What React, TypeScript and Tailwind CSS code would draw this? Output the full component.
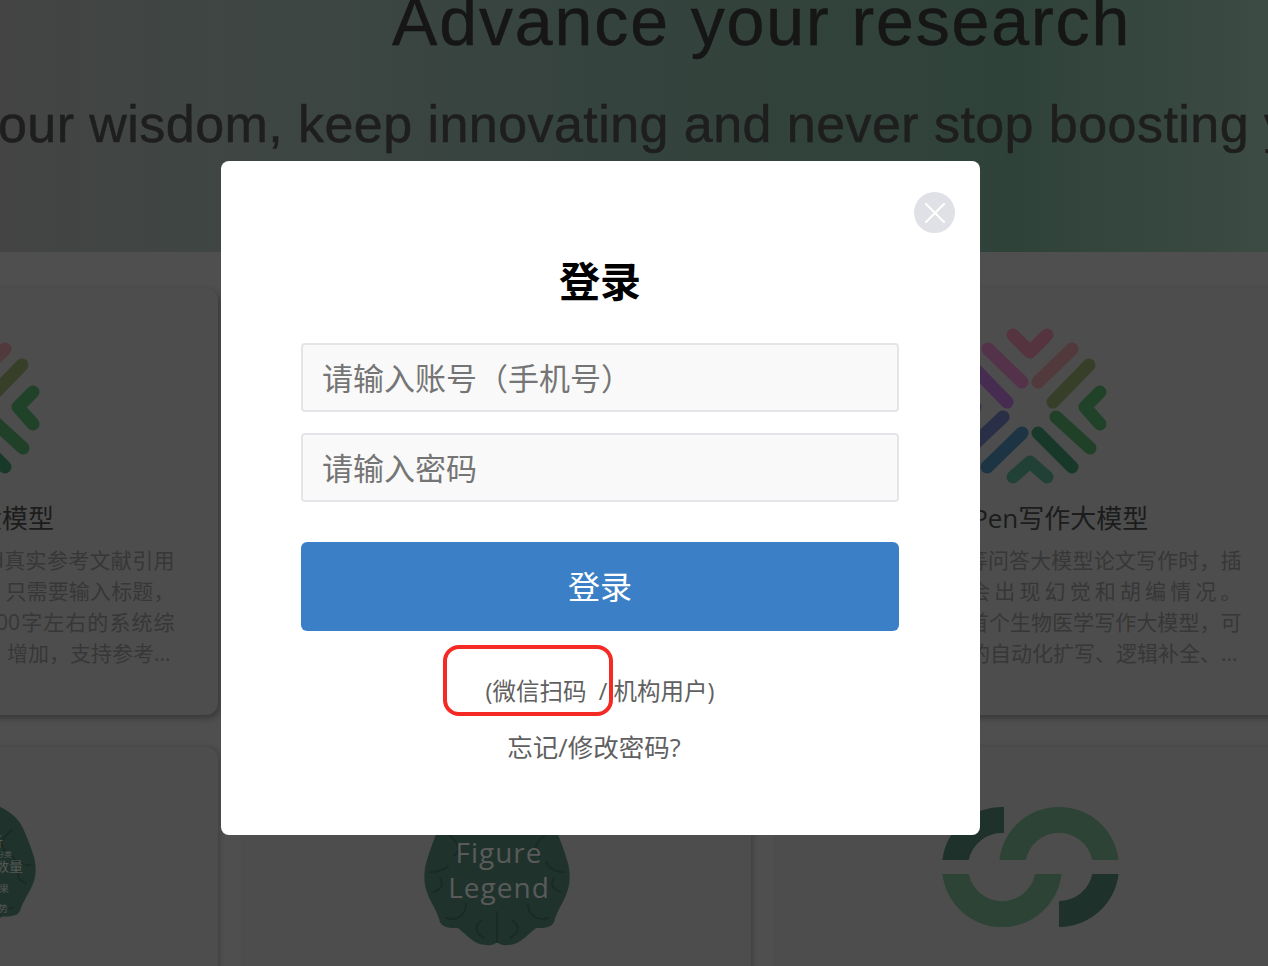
const cjk = "font-['Open_Sans','Noto_Sans_CJK_SC',sans-serif]";

const strokes = [
  { d: "M-17 -72L0 -55L17 -72", color: "#56343f" },
  { d: "M42 -58L8 -25", color: "#523a3c" },
  { d: "M59 -42L23 -5", color: "#373f28" },
  { d: "M70 -15L55 0L70 17", color: "#1f4228" },
  { d: "M26 10L60 41", color: "#204028" },
  { d: "M8 26L42 60", color: "#18392a" },
  { d: "M-17 70L0 55L17 70", color: "#214036" },
  { d: "M-8 26L-43 60", color: "#1c3444" },
  { d: "M-27 10L-60 41", color: "#2a2f48" },
  { d: "M-70 -15L-55 0L-70 17", color: "#3d2f5a" },
  { d: "M-23 -5L-59 -42", color: "#472c52" },
  { d: "M-8 -25L-42 -58", color: "#54334a" },
];

function CrossLogo() {
  return (
    <svg viewBox="-80 -80 160 160" className="w-[160px] h-[160px] mx-auto">
      {strokes.map((s) => (
        <path
          key={s.d}
          d={s.d}
          fill="none"
          stroke={s.color}
          strokeWidth="13"
          strokeLinecap="round"
          strokeLinejoin="round"
        />
      ))}
    </svg>
  );
}

function Brain({ height, children }: { height: number; children?: React.ReactNode }) {
  return (
    <svg viewBox="0 0 146 146" width={146} height={height} preserveAspectRatio="none" className="mx-auto">
      <path
        d="M73 0C100 0 125 12 133 32C137 42 140 50 143 60C147 72 146 85 143 92C140 102 133 110 130 122C127 128 120 128 112 128C104 134 96 145 84 145C79 146 75 144 73 142C71 144 67 146 62 145C50 145 42 134 34 128C26 128 19 128 16 122C13 110 6 102 3 92C0 85 -1 72 3 60C6 50 9 42 13 32C21 12 46 0 73 0Z"
        fill="#1f332c"
      />
      <g fill="none" stroke="#1a2b25" strokeWidth="2" strokeLinecap="round">
        <path d="M22 118C34 122 42 114 42 104" />
        <path d="M124 118C112 122 104 114 104 104" />
        <path d="M73 142L73 112" />
        <path d="M60 138C50 132 50 126 58 120" />
        <path d="M86 138C96 132 96 126 88 120" />
        <path d="M6 72C14 72 20 70 24 66" />
        <path d="M140 72C132 72 126 70 122 62" />
        <path d="M10 92C18 88 20 84 16 78" />
        <path d="M136 92C128 88 126 84 130 78" />
        <path d="M24 34C34 42 38 50 30 56" />
        <path d="M122 34C112 42 108 50 116 56" />
      </g>
      {children}
    </svg>
  );
}

function RingLogo() {
  return (
    <svg viewBox="0 0 179 123" className="w-[179px] h-[123px] mx-auto">
      <path d="M58.4 54A60 60 0 0 1 177.6 54L151.3 54A34 34 0 0 0 84.7 54Z" fill="#2c4336" />
      <path d="M1.4 68A60 60 0 0 0 120.6 68L94.3 68A34 34 0 0 1 27.7 68Z" fill="#2c4336" />
      <path d="M1.4 54A60 60 0 0 1 63 1L63 27A34 34 0 0 0 27.7 54Z" fill="#1e312b" />
      <path d="M177.6 68A60 60 0 0 1 118 121L118 95A34 34 0 0 0 151.3 68Z" fill="#1e312b" />
    </svg>
  );
}

function ModelCard({ title, lines, tail }: { title: string; lines: string[]; tail: string }) {
  return (
    <div className="h-[427px] pt-[39px] rounded-xl bg-[#4d4d4d] shadow-[2px_3px_6px_rgba(0,0,0,0.3)]">
      <CrossLogo />
      <h3 className="mt-[12px] text-center text-[26px] leading-[38px] font-normal text-[#1c1c1c]">{title}</h3>
      <div className="mt-[8px] w-[423px] mx-auto text-[21px] leading-[31px] text-[#373737]">
        {lines.map((line) => (
          <p key={line} className="whitespace-nowrap [text-align:justify] [text-align-last:justify]">
            {line}
          </p>
        ))}
        <p className="whitespace-nowrap text-right pr-[4px]">{tail}</p>
      </div>
    </div>
  );
}

function LowerCard({ children, top }: { children?: React.ReactNode; top: string }) {
  return <div className={`h-[300px] rounded-xl bg-[#4d4d4d] shadow-[2px_0_5px_rgba(0,0,0,0.18)] ${top}`}>{children}</div>;
}

function LoginModal() {
  return (
    <div className="absolute left-[221px] top-[161px] w-[759px] h-[674px] rounded-lg bg-white pl-[80px] pr-[81px] pt-[93px]">
      <button className="absolute right-[25px] top-[31px] w-[41px] h-[41px] rounded-full bg-[#e0e1e6] flex items-center justify-center">
        <svg viewBox="0 0 20 20" className="w-[20px] h-[20px]">
          <path d="M1 1L19 19M19 1L1 19" stroke="#fff" strokeWidth="2" strokeLinecap="round" />
        </svg>
      </button>

      <h2 className="text-center text-[41px] leading-[54px] font-bold text-black">登录</h2>

      <div className="mt-[35px] flex flex-col gap-[21px]">
        <input
          placeholder="请输入账号（手机号）"
          className="w-full h-[69px] px-[19px] rounded border-2 border-[#e4e5e9] bg-[#f9f9f9] text-[31px] placeholder:text-[#757575] outline-none"
        />
        <input
          placeholder="请输入密码"
          className="w-full h-[69px] px-[19px] rounded border-2 border-[#e4e5e9] bg-[#f9f9f9] text-[31px] placeholder:text-[#757575] outline-none"
        />
      </div>

      <button className="mt-[40px] w-full h-[89px] rounded-md bg-[#3b80c6] text-white text-[32px]">登录</button>

      <p className="mt-[43px] text-center text-[23.5px] leading-[34px] text-[#606060]">(微信扫码&nbsp;&nbsp;/&nbsp;机构用户)</p>
      <p className="mt-[22px] pr-[12px] text-center text-[25.5px] leading-[34px] text-[#606060]">忘记/修改密码?</p>

      {/* red annotation on the screenshot */}
      <div className="absolute left-[222px] top-[484px] w-[170px] h-[71px] rounded-[16px] border-4 border-[#f52a24]" />
    </div>
  );
}

export default function App() {
  return (
    <div className={`relative w-[1268px] h-[966px] overflow-hidden bg-[#4f4f4f] ${cjk}`}>
      <header className="h-[252px] overflow-hidden bg-[linear-gradient(90deg,#444444_0%,#3e4644_20%,#34433d_50%,#2f4239_80%,#3c4b44_100%)] font-['Liberation_Sans','Noto_Sans_CJK_SC',sans-serif]">
        <h1 className="mt-[-18px] ml-[392px] whitespace-nowrap text-[68px] leading-[78px] tracking-[1.9px] font-normal text-[#161616] [-webkit-text-stroke:0.5px_#161616]">
          Advance your research
        </h1>
        <p className="mt-[34px] ml-[-2px] whitespace-nowrap text-[52px] leading-[60px] tracking-[0.44px] text-[#1e1e1e] [-webkit-text-stroke:0.5px_#1e1e1e]">
          our wisdom, keep innovating and never stop boosting your research
        </p>
      </header>

      <main className="ml-[-292px] pt-[36px] grid grid-cols-[510px_508px_508px] gap-x-[25px] gap-y-[32px]">
        <ModelCard
          title="综述写作大模型"
          lines={[
            "基于海量医学文献PubMed真实参考文献引用",
            "的综述写作大模型小工具，只需要输入标题，",
            "一键即可快速自动生成3000字左右的系统综",
          ]}
          tail="述文章，引用文献的数量、增加，支持参考..."
        />
        <div className="h-[427px] rounded-xl bg-[#4d4d4d]" />
        <ModelCard
          title="MediPen写作大模型"
          lines={[
            "在使用ChatGPT等问答大模型论文写作时，插",
            "入文献时常常会出现幻觉和胡编情况。",
            "MediPen是全球首个生物医学写作大模型，可",
          ]}
          tail="可实现论文内容的自动化扩写、逻辑补全、..."
        />

        <LowerCard top="pt-[52px]">
          <Brain height={134}>
            <g fill="#585858" textAnchor="end">
              <text x="113" y="51" fontSize="14">分析</text>
              <text x="122" y="63" fontSize="8">分类</text>
              <text x="133" y="79" fontSize="14">样本数量</text>
              <text x="119" y="101" fontSize="10">结果</text>
              <text x="118" y="123" fontSize="10">趋势</text>
            </g>
          </Brain>
        </LowerCard>
        <LowerCard top="pt-[53px]">
          <Brain height={146}>
            <g fill="#5a5a5a" textAnchor="middle" fontSize="28" letterSpacing="1">
              <text x="75" y="63">Figure</text>
              <text x="75" y="98">Legend</text>
            </g>
          </Brain>
        </LowerCard>
        <LowerCard top="pt-[59px]">
          <RingLogo />
        </LowerCard>
      </main>

      <LoginModal />
    </div>
  );
}
